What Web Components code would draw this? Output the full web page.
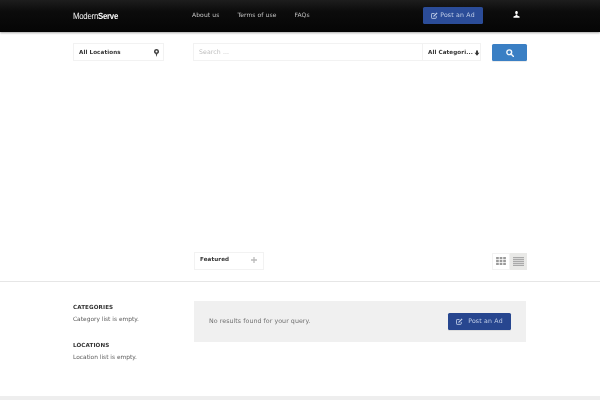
<!doctype html>
<html><head><meta charset="utf-8">
<style>
html,body{margin:0;padding:0;background:#fff;width:600px;height:400px;overflow:hidden}
body{font-family:"DejaVu Sans",sans-serif;font-size:6px;color:#666;text-rendering:geometricPrecision;filter:blur(.33px)}
</style></head><body>
<ms-header></ms-header>
<ms-search></ms-search>
<ms-sortbar></ms-sortbar>
<ms-results></ms-results>
<ms-bottom></ms-bottom>
<script>
const ICON={
 edit:'<svg width="7" height="7" viewBox="0 0 16 16" fill="none" stroke="currentColor" stroke-width="2"><path d="M12 9v4a1.500 1.500 0 0 1-1.500 1.500h-8A1.500 1.500 0 0 1 1 13V5a1.500 1.500 0 0 1 1.500-1.500H8"/><path d="M5.500 8.500 13 1l2 2-7.500 7.500-2.600.6z" fill="currentColor" stroke="none"/></svg>',
 user:'<svg width="7" height="7" viewBox="0 0 16 16" fill="currentColor"><path d="M8 0c1.900 0 3 1.400 3 3.400S9.900 8 8 8 5 5.400 5 3.400 6.100 0 8 0zM6 8.500h4l.3 2.200 3.700 1.300c.9.300 1 1 1 1.500V15.500H1V13.500c0-.5.100-1.200 1-1.500l3.700-1.300z"/></svg>',
 pin:'<svg width="5" height="8" viewBox="0 0 10 16" fill="currentColor"><path fill-rule="evenodd" d="M5 0a5 5 0 0 1 1.500 9.800L5 16 3.500 9.800A5 5 0 0 1 5 0zm0 3a2 2 0 1 0 0 4 2 2 0 0 0 0-4z"/></svg>',
 down:'<svg width="6" height="6" viewBox="0 0 14 16" fill="currentColor"><path d="M4.500 1h5v6h4L7 15 .5 7h4z"/></svg>',
 plus:'<svg width="6" height="6" viewBox="0 0 14 14" fill="currentColor"><path d="M5.500 0h3v5.500H14v3H8.500V14h-3V8.500H0v-3h5.500z"/></svg>',
 search:'<svg width="8" height="8" viewBox="0 0 16 16" fill="none" stroke="currentColor" stroke-width="2.800"><circle cx="6.500" cy="6.500" r="4.800"/><path d="m10 10 5 5" stroke-linecap="round"/></svg>',
 grid:'<svg width="10" height="8" viewBox="0 0 11 9" fill="currentColor"><path d="M0 0h3v2.400H0zM4 0h3v2.400H4zM8 0h3v2.400H8zM0 3.300h3v2.400H0zM4 3.300h3v2.400H4zM8 3.300h3v2.400H8zM0 6.600h3V9H0zM4 6.600h3V9H4zM8 6.600h3V9H8z"/></svg>',
 list:'<svg width="11" height="9" viewBox="0 0 11 9" fill="currentColor"><path d="M0 0h11v1.200H0zM0 2h11v1.200H0zM0 4h11v1.200H0zM0 6h11v1.200H0zM0 8h11v1H0z"/></svg>'
};
function def(name,css,html){
 customElements.define(name,class extends HTMLElement{
  constructor(){super();this.attachShadow({mode:'open'}).innerHTML='<style>'+css+'</style>'+html}
 });
}
def('ms-button',`
 :host{display:inline-flex;align-items:center;justify-content:center;gap:var(--g,2px);box-sizing:border-box;height:var(--h,17px);width:var(--w,auto);background:#27468f;color:#c4d1ea;border-radius:1.500px;font:6.200px "DejaVu Sans",sans-serif;letter-spacing:.2px;box-shadow:0 1px 0 rgba(0,0,0,.08)}
 ::slotted(svg){flex:none}
`,'<slot></slot>');
def('ms-header',`
 :host{display:flex;align-items:center;box-sizing:border-box;height:31.500px;padding:0 0 0 73px;background:linear-gradient(#1d1d1d,#0c0c0c 35%,#050505);box-shadow:0 1px 2px rgba(0,0,0,.35);font:6px "DejaVu Sans",sans-serif;color:#c4c4c4}
 .logo{width:119px;font:9px "Liberation Sans",sans-serif;letter-spacing:-.3px;color:#f2f2f2;transform:scaleX(.87);transform-origin:left;padding-top:1px}
 .logo b{color:#fff}
 nav{display:flex;gap:18px;width:231px;letter-spacing:.1px}
 ms-button{--w:60px;--h:17px;margin-bottom:1px;background:#2b4c98}
 .user{margin-left:30px;color:#fff;display:flex;margin-bottom:3px}
`,`<div class="logo">Modern<b>Serve</b></div>
 <nav><span>About us</span><span>Terms of use</span><span>FAQs</span></nav>
 <ms-button>${ICON.edit}<span>Post an Ad</span></ms-button>
 <div class="user">${ICON.user}</div>`);
def('ms-search',`
 :host{display:flex;align-items:flex-start;padding:11.500px 73px 0;height:30px;font:700 5.600px "DejaVu Sans",sans-serif;color:#333}
 .box{box-sizing:border-box;height:18px;border:1px solid #f2f2f2;display:flex;align-items:center;background:#fff;letter-spacing:.1px}
 .loc{width:91px;padding:0 4px 0 5px;justify-content:space-between;margin-right:29px}
 .loc span{padding-top:1px}
 .loc svg{color:#444;margin-top:1px}
 .q{width:288px;margin-right:11px;padding-left:5px;justify-content:space-between;padding-right:0}
 .ph{color:#bdbdbd;font-weight:400;font-size:6.200px;letter-spacing:.1px;padding-top:1px}
 .cat{box-sizing:border-box;height:100%;width:58px;border-left:1px solid #f2f2f2;display:flex;align-items:center;padding:1px 0 0 5px;white-space:nowrap;gap:1.500px}
 .cat svg{color:#333;flex:none}
 .go{width:35px;height:17px;margin-top:1px;background:#3a7fc4;color:#f2f7fc;display:flex;align-items:center;justify-content:center;border-radius:1.500px;box-shadow:0 1px 0 rgba(0,0,0,.08)}
`,`<div class="box loc"><span>All Locations</span>${ICON.pin}</div>
 <div class="box q"><span class="ph">Search ...</span><div class="cat"><span>All Categori...</span>${ICON.down}</div></div>
 <div class="go">${ICON.search}</div>`);
def('ms-sortbar',`
 :host{display:flex;justify-content:space-between;align-items:flex-start;box-sizing:border-box;height:208px;margin-left:194px;width:333px;padding-top:178.500px;font:700 5.600px "DejaVu Sans",sans-serif;color:#333}
 .sort{box-sizing:border-box;width:70px;height:18px;border:1px solid #f2f2f2;display:flex;align-items:center;justify-content:space-between;padding:0 6px 1px 5px;letter-spacing:.1px}
 .sort svg{color:#bbb}
 .views{display:flex;margin-top:1px}
 .v{width:17.500px;height:17px;display:flex;align-items:center;justify-content:center;color:#999;box-sizing:border-box;border:1px solid #f2f2f2}
 .v.on{background:#e9e9e7;border-color:#e9e9e7;color:#aaa}
`,`<div class="sort"><span>Featured</span>${ICON.plus}</div>
 <div class="views"><div class="v">${ICON.grid}</div><div class="v on">${ICON.list}</div></div>`);
def('ms-results',`
 :host{display:grid;grid-template-columns:121px 332px;box-sizing:border-box;height:115px;border-top:1px solid #e6e6e6;padding:19px 0 0 73px;font:6.300px "DejaVu Sans",sans-serif;color:#5c5c5c}
 .side{display:flex;flex-direction:column;padding-top:3px}
 h4{margin:0 0 4px;font:700 5.600px "DejaVu Sans",sans-serif;color:#333;letter-spacing:.1px;line-height:8px}
 p{margin:0 0 17px;line-height:9px;font-size:5.900px}
 .panel{box-sizing:border-box;height:41px;background:#f0f0f0;display:flex;align-items:center;justify-content:space-between;padding:0 15px;color:#707070;letter-spacing:.05px}
 ms-button{--w:63px;--h:17px;--g:5px;background:#27468f;margin-top:-1px}
`,`<div class="side"><h4>CATEGORIES</h4><p>Category list is empty.</p><h4>LOCATIONS</h4><p>Location list is empty.</p></div>
 <div class="panel"><span>No results found for your query.</span><ms-button>${ICON.edit}<span>Post an Ad</span></ms-button></div>`);
def('ms-bottom',`:host{display:block;height:4px;background:#eeeeee}`,'');
</script>
</body></html>
